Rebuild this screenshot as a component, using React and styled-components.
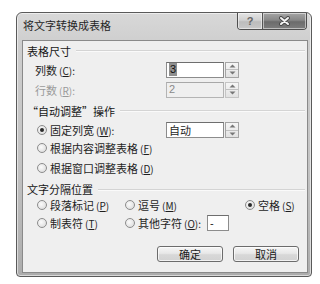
import React from 'react';
import styled, { createGlobalStyle } from 'styled-components';

const Global = createGlobalStyle`
  html, body { margin: 0; padding: 0; background: #ffffff; }
  body { font-family: "Noto Sans CJK SC", "Noto Sans", sans-serif; font-size: 11px; color: #1e1e1e; }
`;

const Page = styled.div`
  padding: 12px 0 0 16px;
`;

const Window = styled.div`
  box-sizing: border-box;
  width: 296px;
  height: 265px;
  border: 1px solid #5a5a5a;
  border-radius: 6px 6px 4px 4px;
  background: linear-gradient(180deg, #d8d8d8 0%, #cecece 12%, #c2c2c2 60%, #acacac 100%);
  box-shadow: inset 0 0 0 1px rgba(255, 255, 255, 0.55);
  display: flex;
  flex-direction: column;
  padding: 0 3px 3px 5px;
`;

const TitleBar = styled.div`
  height: 27px;
  flex: none;
  display: flex;
  justify-content: space-between;
  align-items: flex-start;
`;

const Title = styled.div`
  margin-left: 1px;
  line-height: 24px;
  font-size: 11px;
  color: #262626;
`;

const CaptionButtons = styled.div`
  display: flex;
  margin-right: 1px;
  height: 17px;
  border: 1px solid #4e4e4e;
  border-top: none;
  border-radius: 0 0 4px 4px;
  overflow: hidden;
  box-sizing: border-box;
`;

const CapBtn = styled.div`
  width: ${p => p.$w}px;
  display: flex;
  align-items: center;
  justify-content: center;
  background: ${p => p.$dark
    ? 'linear-gradient(180deg, #a6a6a6 0%, #878787 45%, #6c6c6c 55%, #7e7e7e 100%)'
    : 'linear-gradient(180deg, #e4e4e4 0%, #d0d0d0 45%, #bcbcbc 55%, #c8c8c8 100%)'};
  box-shadow: inset 0 0 0 1px rgba(255, 255, 255, 0.5);
  & + & { border-left: 1px solid #555; }
  font-family: "Liberation Sans", sans-serif;
  font-weight: bold;
  font-size: 11px;
  color: #666;
`;

const Content = styled.div`
  flex: 1;
  border: 1px solid #8a8a8a;
  background: #efefef;
  display: flex;
  flex-direction: column;
  padding: 0 2px 0 0;
`;

const Header = styled.div`
  height: ${p => p.$h}px;
  display: flex;
  align-items: center;
  padding-left: 4px;
  font-size: 11px;
  color: #161616;
  &::after {
    content: '';
    flex: 1;
    height: 1px;
    margin-left: 5px;
    background: #d4d4d4;
    box-shadow: 0 1px 0 #fafafa;
  }
`;

const Row = styled.div`
  height: ${p => p.$h}px;
  display: flex;
  align-items: center;
  padding-left: ${p => p.$indent}px;
  color: ${p => p.$disabled ? '#9a9a9a' : '#1e1e1e'};
`;

const Label = styled.span`
  width: ${p => p.$w ? `${p.$w}px` : 'auto'};
  flex: none;
  white-space: nowrap;
`;

const Mn = styled.span`
  margin-left: 2px;
  font-size: 10px;
  & u { text-underline-offset: 1px; }
`;

const Field = styled.div`
  display: flex;
  align-items: center;
  gap: 1px;
`;

const Input = styled.div`
  box-sizing: border-box;
  width: ${p => p.$w}px;
  height: ${p => p.$h || 16}px;
  margin-left: ${p => p.$ml || 0}px;
  border: 1px solid ${p => p.$disabled ? '#b4b4b4' : '#8c8c8c'};
  border-top-color: ${p => p.$disabled ? '#a8a8a8' : '#6e6e6e'};
  background: ${p => p.$disabled ? '#efefef' : '#ffffff'};
  color: ${p => p.$disabled ? '#8a8a8a' : '#1e1e1e'};
  display: flex;
  align-items: center;
  padding-left: 2px;
  font-family: "Liberation Sans", "Noto Sans CJK SC", sans-serif;
  font-size: 11px;
  line-height: 1;
`;

const InputCjk = styled.span`
  font-family: "Noto Sans CJK SC", sans-serif;
  font-size: 11px;
`;

const Sel = styled.span`
  background: #8f8f8f;
  color: #111;
  padding: 1px 1px;
`;

const Spin = styled.div`
  box-sizing: border-box;
  width: 14px;
  height: 16px;
  border: 1px solid ${p => p.$disabled ? '#c4c4c4' : '#a4a4a4'};
  background: linear-gradient(180deg, #f6f6f6, #e2e2e2);
  display: flex;
  flex-direction: column;
`;

const SpinHalf = styled.div`
  flex: 1;
  display: flex;
  align-items: center;
  justify-content: center;
  & + & { border-top: 1px solid #c0c0c0; }
`;

const RadioBox = styled.span`
  box-sizing: border-box;
  width: 10px;
  height: 10px;
  border-radius: 50%;
  border: 1px solid #8c8c8c;
  background: radial-gradient(circle at 40% 40%, #fbfbfb 0%, #d6d6d6 100%);
  display: inline-flex;
  align-items: center;
  justify-content: center;
  flex: none;
  margin-right: 3px;
  &::after {
    content: '';
    width: 4px;
    height: 4px;
    border-radius: 50%;
    background: ${p => p.$on ? '#2a2a2a' : 'transparent'};
  }
`;

const Choice = styled.div`
  display: flex;
  align-items: center;
  white-space: nowrap;
`;

const SepGrid = styled.div`
  display: grid;
  grid-template-columns: 88px 120px auto;
  grid-template-rows: 12px 24px;
  align-items: center;
  padding-left: 14px;
`;

const ButtonRow = styled.div`
  display: flex;
  justify-content: flex-end;
  gap: 10px;
  margin-top: 11px;
  padding-right: 6px;
`;

const Button = styled.button`
  box-sizing: border-box;
  width: ${p => p.$w}px;
  height: 16px;
  border: 1px solid #6c6c6c;
  border-radius: 3px;
  background: linear-gradient(180deg, #f6f6f6 0%, #e8e8e8 45%, #d8d8d8 55%, #d2d2d2 100%);
  box-shadow: inset 0 0 0 1px rgba(255, 255, 255, 0.7);
  font-family: "Noto Sans CJK SC", sans-serif;
  font-size: 11px;
  color: #1a1a1a;
  padding: 0;
  line-height: 1;
`;

const Arrow = ({ up }) => (
  <svg width="7" height="4" viewBox="0 0 7 4">
    <path d={up ? 'M0.5 3.5 L3.5 0.5 L6.5 3.5 Z' : 'M0.5 0.5 L3.5 3.5 L6.5 0.5 Z'} fill="#777" />
  </svg>
);

const Spinner = ({ disabled }) => (
  <Spin $disabled={disabled}>
    <SpinHalf><Arrow up /></SpinHalf>
    <SpinHalf><Arrow /></SpinHalf>
  </Spin>
);

const M = ({ k, colon }) => (
  <Mn>(<u>{k}</u>){colon ? ':' : ''}</Mn>
);

export default function App() {
  return (
    <>
      <Global />
      <Page>
        <Window>
          <TitleBar>
            <Title>将文字转换成表格</Title>
            <CaptionButtons>
              <CapBtn $w={24}>?</CapBtn>
              <CapBtn $w={43} $dark>
                <svg width="13" height="10" viewBox="0 0 13 10">
                  <path d="M3 2 L10 8 M10 2 L3 8" stroke="#4a4a4a" strokeWidth="4" strokeLinecap="round" />
                  <path d="M3 2 L10 8 M10 2 L3 8" stroke="#f4f4f4" strokeWidth="2" strokeLinecap="round" />
                </svg>
              </CapBtn>
            </CaptionButtons>
          </TitleBar>
          <Content>
            <Header $h={19}>表格尺寸</Header>
            <Row $h={19} $indent={12}>
              <Label $w={131}>列数<M k="C" colon /></Label>
              <Field>
                <Input $w={58}><Sel>3</Sel></Input>
                <Spinner />
              </Field>
            </Row>
            <Row $h={21} $indent={12} $disabled>
              <Label $w={131}>行数<M k="R" colon /></Label>
              <Field>
                <Input $w={58} $disabled>2</Input>
                <Spinner disabled />
              </Field>
            </Row>
            <Header $h={21}>“自动调整”操作</Header>
            <Row $h={18} $indent={14}>
              <Label $w={129}>
                <Choice><RadioBox $on />固定列宽<M k="W" colon /></Choice>
              </Label>
              <Field>
                <Input $w={58}><InputCjk>自动</InputCjk></Input>
                <Spinner />
              </Field>
            </Row>
            <Row $h={18} $indent={14}>
              <Choice><RadioBox />根据内容调整表格<M k="F" /></Choice>
            </Row>
            <Row $h={22} $indent={14}>
              <Choice><RadioBox />根据窗口调整表格<M k="D" /></Choice>
            </Row>
            <Header $h={20}>文字分隔位置</Header>
            <SepGrid>
              <Choice><RadioBox />段落标记<M k="P" /></Choice>
              <Choice><RadioBox />逗号<M k="M" /></Choice>
              <Choice><RadioBox $on />空格<M k="S" /></Choice>
              <Choice><RadioBox />制表符<M k="T" /></Choice>
              <Choice>
                <RadioBox />其他字符<M k="O" colon />
                <Input $w={22} $h={16} $ml={6}>-</Input>
              </Choice>
              <span />
            </SepGrid>
            <ButtonRow>
              <Button $w={66}>确定</Button>
              <Button $w={66}>取消</Button>
            </ButtonRow>
          </Content>
        </Window>
      </Page>
    </>
  );
}
